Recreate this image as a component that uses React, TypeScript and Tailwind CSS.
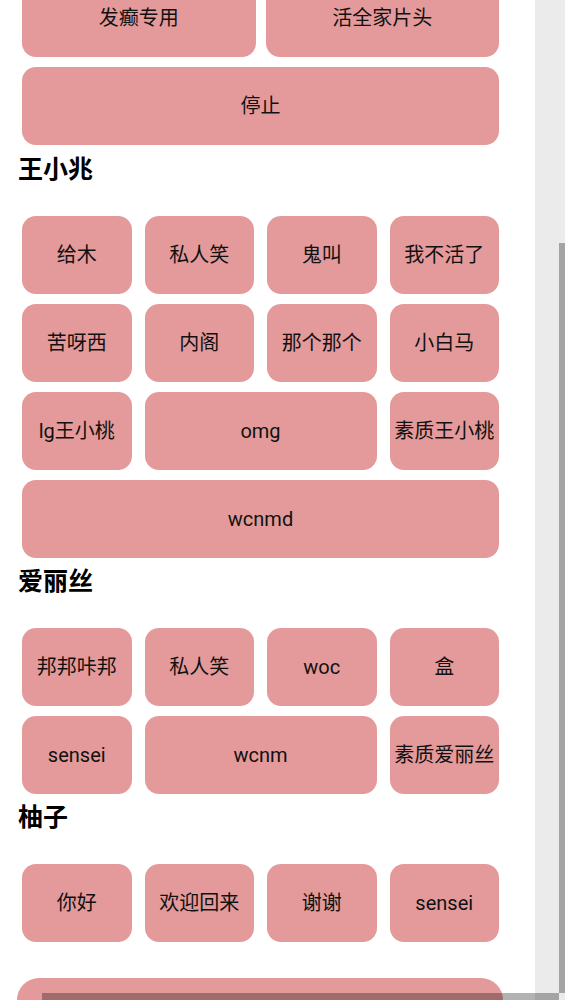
import React from "react";

type Btn = { label: string; span?: number };

const sections: { title: string; items: Btn[] }[] = [
  {
    title: "王小兆",
    items: [
      { label: "给木" },
      { label: "私人笑" },
      { label: "鬼叫" },
      { label: "我不活了" },
      { label: "苦呀西" },
      { label: "内阁" },
      { label: "那个那个" },
      { label: "小白马" },
      { label: "lg王小桃" },
      { label: "omg", span: 2 },
      { label: "素质王小桃" },
      { label: "wcnmd", span: 4 },
    ],
  },
  {
    title: "爱丽丝",
    items: [
      { label: "邦邦咔邦" },
      { label: "私人笑" },
      { label: "woc" },
      { label: "盒" },
      { label: "sensei" },
      { label: "wcnm", span: 2 },
      { label: "素质爱丽丝" },
    ],
  },
  {
    title: "柚子",
    items: [
      { label: "你好" },
      { label: "欢迎回来" },
      { label: "谢谢" },
      { label: "sensei" },
    ],
  },
];

const spanClass: Record<number, string> = {
  1: "col-span-1",
  2: "col-span-2",
  3: "col-span-3",
  4: "col-span-4",
};

function SoundButton({ label, className = "" }: { label: string; className?: string }) {
  return (
    <button
      className={
        "h-[78px] rounded-[14px] bg-[#e49a9b] text-[20px] text-[#111111] flex items-center justify-center whitespace-nowrap " +
        className
      }
    >
      {label}
    </button>
  );
}

export default function App() {
  return (
    <div
      className="relative flex w-[565px] h-[1000px] overflow-hidden bg-white"
      style={{ fontFamily: 'Roboto, "Noto Sans CJK SC", sans-serif' }}
    >
      <div className="w-[535px] shrink-0 pl-[22px]">
        <div className="w-[477px] -mt-[21px]">
          <div className="grid grid-cols-2 gap-[10px]">
            <SoundButton label="发癫专用" />
            <SoundButton label="活全家片头" />
          </div>
          <SoundButton label="停止" className="w-full mt-[10px]" />

          {sections.map((s, idx) => (
            <div key={s.title}>
              <h3
                className={
                  (idx === 0 ? "mt-[7px] " : "mt-[6px] ") +
                  "-ml-[4px] text-[25px] leading-[36px] font-bold text-black"
                }
              >
                {s.title}
              </h3>
              <div className="mt-[28px] grid grid-cols-4 gap-x-[13px] gap-y-[10px]">
                {s.items.map((it, i) => (
                  <SoundButton
                    key={i}
                    label={it.label}
                    className={spanClass[it.span ?? 1]}
                  />
                ))}
              </div>
            </div>
          ))}

          <div className="mt-[36px] -ml-[5px] w-[486px] h-[78px] rounded-[22px] bg-[#e49a9b]" />
        </div>
      </div>
      <div className="w-[30px] shrink-0 bg-[#ebebeb]" />

      {/* vertical scrollbar thumb */}
      <div className="absolute right-0 top-[243px] w-[6px] h-[750px] bg-black/30" />
      {/* horizontal scrollbar */}
      <div className="absolute left-[42px] bottom-0 w-[517px] h-[7px] bg-black/30" />
    </div>
  );
}
